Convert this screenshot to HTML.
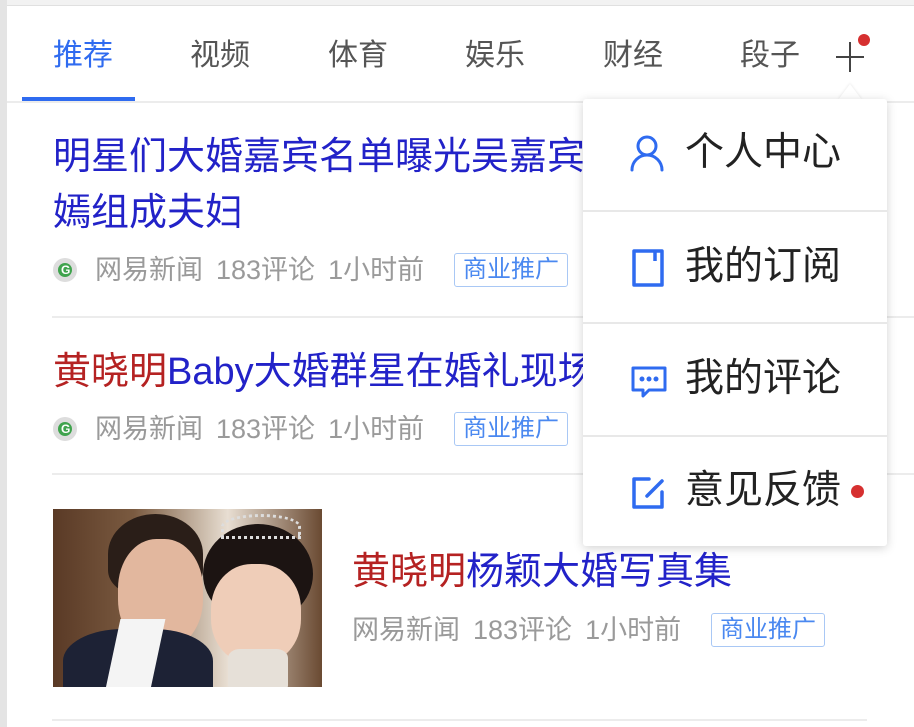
<!DOCTYPE html>
<html><head><meta charset="utf-8"><style>
*{margin:0;padding:0;box-sizing:border-box}
body{width:914px;height:727px;overflow:hidden;background:#fff;position:relative;font-family:"Liberation Sans","Noto Sans CJK SC",sans-serif}
.a{position:absolute;white-space:nowrap}
.tab{position:absolute;top:37px;font-size:30px;color:#555;line-height:38px}
.t{font-size:38px;color:#2222c8;line-height:44px}
.r{color:#b52222}
.m{font-size:27px;color:#9a9a9a;line-height:32px}
.m span{margin-right:13px}
.tag{position:absolute;border:1.5px solid #a9c8f5;border-radius:3px;color:#4a88f0;font-size:24px;line-height:31px;width:114px;height:34px;text-align:center}
.div{position:absolute;left:52px;right:0;height:2px;background:#ececec}
.g{position:absolute;width:24px;height:24px;border-radius:50%;background:#ddd;}
.g:after{content:"";position:absolute;left:5px;top:5px;width:14px;height:14px;border-radius:50%;background:#3fa34d}
.g:before{content:"G";position:absolute;left:8px;top:4px;color:#fff;font-size:12px;font-weight:bold;z-index:2;line-height:16px}
.menu{position:absolute;left:583px;top:99px;width:304px;height:447px;background:#fff;box-shadow:0 2px 10px rgba(0,0,0,.18);border-radius:3px}
.mi{position:absolute;left:102px;font-size:39px;color:#222;line-height:46px}
.ms{position:absolute;left:0;right:0;height:2px;background:#e8e8e8}
</style></head><body>
<div class="a" style="left:0;top:0;width:914px;height:6px;background:#f2f2f2;border-bottom:1px solid #e0e0e0"></div>
<div class="a" style="left:0;top:0;width:7px;height:727px;background:#e4e4e4"></div>
<div class="tab" style="left:53px;color:#2f6bf0">推荐</div>
<div class="tab" style="left:190px">视频</div>
<div class="tab" style="left:328px">体育</div>
<div class="tab" style="left:465px">娱乐</div>
<div class="tab" style="left:603px">财经</div>
<div class="tab" style="left:740px">段子</div>
<div class="a" style="left:836px;top:56px;width:28px;height:2px;background:#444"></div>
<div class="a" style="left:849px;top:42px;width:2px;height:30px;background:#444"></div>
<div class="a" style="left:858px;top:34px;width:12px;height:12px;border-radius:50%;background:#d63030"></div>
<div class="a" style="left:22px;top:97px;width:113px;height:4px;background:#2f6bf0"></div>
<div class="a" style="left:7px;top:101px;width:907px;height:2px;background:#ececec"></div>

<div class="a t" style="left:53px;top:135px">明星们大婚嘉宾名单曝光吴嘉宾</div>
<div class="a t" style="left:53px;top:191px">嫣组成夫妇</div>
<div class="g" style="left:53px;top:258px"></div>
<div class="a m" style="left:95px;top:254px"><span>网易新闻</span><span>183评论</span>1小时前</div>
<div class="tag" style="left:454px;top:253px">商业推广</div>
<div class="div" style="top:316px"></div>

<div class="a t" style="left:53px;top:350px"><span class="r">黄晓明</span>Baby大婚群星在婚礼现场</div>
<div class="g" style="left:53px;top:417px"></div>
<div class="a m" style="left:95px;top:413px"><span>网易新闻</span><span>183评论</span>1小时前</div>
<div class="tag" style="left:454px;top:412px">商业推广</div>
<div class="div" style="top:473px"></div>

<div class="a" style="left:53px;top:509px;width:269px;height:178px;overflow:hidden;background:linear-gradient(90deg,#5a3a26 0%,#7a5a40 30%,#c9b9a8 55%,#e8ded2 65%,#6a4a32 100%)">
 <div class="a" style="left:55px;top:5px;width:95px;height:80px;border-radius:50% 50% 30% 30%;background:#2a1e18"></div>
 <div class="a" style="left:65px;top:30px;width:85px;height:110px;border-radius:45%;background:#e2b79e"></div>
 <div class="a" style="left:10px;top:120px;width:150px;height:80px;border-radius:40% 40% 0 0;background:#1d2235"></div>
 <div class="a" style="left:60px;top:110px;width:45px;height:70px;background:#f4f4f4;transform:skewX(-12deg)"></div>
 <div class="a" style="left:150px;top:15px;width:110px;height:100px;border-radius:50%;background:#1c1412"></div>
 <div class="a" style="left:168px;top:5px;width:80px;height:25px;border-radius:50% 50% 0 0;border:3px dotted #ddd"></div>
 <div class="a" style="left:158px;top:55px;width:90px;height:100px;border-radius:45%;background:#efcdb8"></div>
 <div class="a" style="left:175px;top:140px;width:60px;height:45px;background:#e6e0d8;border-radius:20%"></div>
</div>
<div class="a t" style="left:352px;top:550px"><span class="r">黄晓明</span>杨颖大婚写真集</div>
<div class="a m" style="left:352px;top:614px"><span>网易新闻</span><span>183评论</span>1小时前</div>
<div class="tag" style="left:711px;top:613px">商业推广</div>
<div class="a" style="left:52px;top:719px;width:815px;height:2px;background:#ececec"></div>

<div class="a" style="left:838px;top:84px;width:0;height:0;border-left:12px solid transparent;border-right:12px solid transparent;border-bottom:16px solid #fff;filter:drop-shadow(0 -1px 1px rgba(0,0,0,.08))"></div>
<div class="menu">
 <svg class="a" style="left:46px;top:36px" width="36" height="38" viewBox="0 0 36 38" fill="none" stroke="#2f6bf0" stroke-width="3" stroke-linecap="round"><circle cx="18" cy="11" r="9"/><path d="M3 35a15 15 0 0 1 30 0"/></svg>
 <div class="mi" style="top:31px">个人中心</div>
 <div class="ms" style="top:111px"></div>
 <svg class="a" style="left:48px;top:149px" width="34" height="40" viewBox="0 0 34 40" fill="none" stroke="#2f6bf0" stroke-width="3.5" stroke-linejoin="round"><path d="M3 3h28v34H3z"/><path d="M24 3v10"/></svg>
 <div class="mi" style="top:145px">我的订阅</div>
 <div class="ms" style="top:223px"></div>
 <svg class="a" style="left:48px;top:266px" width="36" height="34" viewBox="0 0 36 34" fill="none" stroke="#2f6bf0" stroke-width="3" stroke-linejoin="round"><path d="M2 3h32v22H18l-6 6v-6H2z"/><circle cx="11" cy="14" r="1" fill="#2f6bf0"/><circle cx="18" cy="14" r="1" fill="#2f6bf0"/><circle cx="25" cy="14" r="1" fill="#2f6bf0"/></svg>
 <div class="mi" style="top:257px">我的评论</div>
 <div class="ms" style="top:336px"></div>
 <svg class="a" style="left:48px;top:377px" width="34" height="34" viewBox="0 0 34 34" fill="none" stroke="#2f6bf0" stroke-width="3.5" stroke-linecap="round" stroke-linejoin="round"><path d="M18 3H3v28h28V16"/><path d="M31 5L16 20"/></svg>
 <div class="mi" style="top:369px">意见反馈</div>
 <div class="a" style="left:268px;top:386px;width:13px;height:13px;border-radius:50%;background:#d63030"></div>
</div>
</body></html>
